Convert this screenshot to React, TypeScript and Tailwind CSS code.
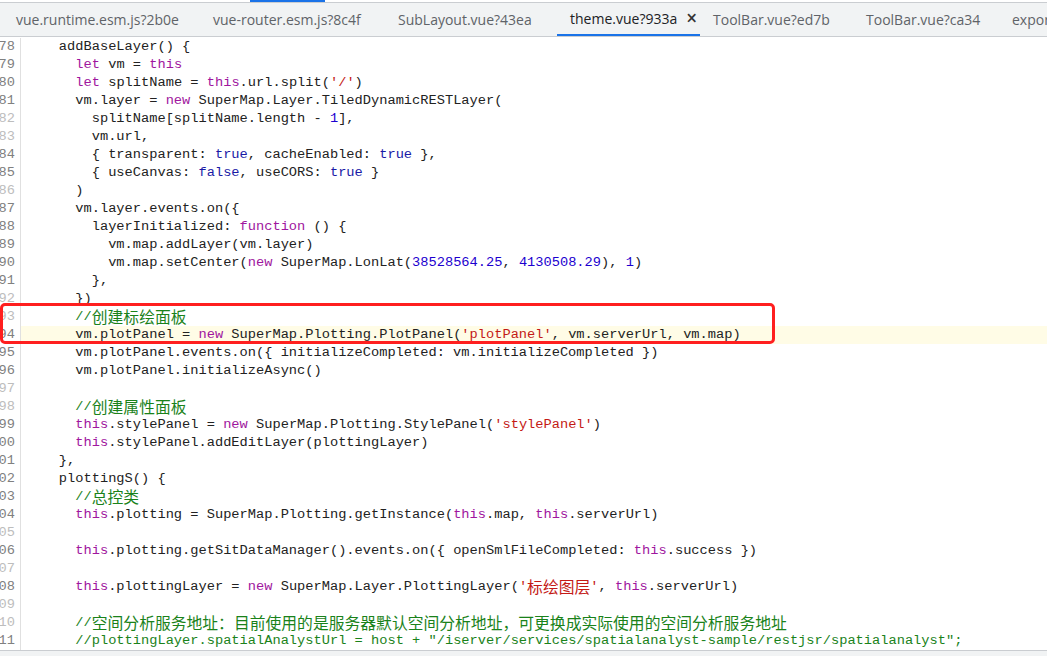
type Tok = [string, string?];

const tabs = [
  { name: "vue.runtime.esm.js?2b0e", w: "w-[197px]" },
  { name: "vue-router.esm.js?8c4f", w: "w-[185px]" },
  { name: "SubLayout.vue?43ea", w: "w-[172px]" },
  { name: "theme.vue?933a", w: "w-[143px]", active: true },
  { name: "ToolBar.vue?ed7b", w: "w-[153px]" },
  { name: "ToolBar.vue?ca34", w: "w-[146px]" },
  { name: "export.js?77f1", w: "w-[160px]" },
];

const code: { n: number; toks: Tok[]; dim?: boolean; hl?: boolean }[] = [
  { n: 78, toks: [["    addBaseLayer() {"]] },
  { n: 79, toks: [["      "], ["let", "k"], [" vm = "], ["this", "k"]] },
  { n: 80, toks: [["      "], ["let", "k"], [" splitName = "], ["this", "k"], [".url.split("], ["'/'", "s"], [")"]] },
  { n: 81, toks: [["      vm.layer = "], ["new", "k"], [" SuperMap.Layer.TiledDynamicRESTLayer("]] },
  { n: 82, dim: true, toks: [["        splitName[splitName.length - "], ["1", "n"], ["],"]] },
  { n: 83, dim: true, toks: [["        vm.url,"]] },
  { n: 84, toks: [["        { transparent: "], ["true", "a"], [", cacheEnabled: "], ["true", "a"], [" },"]] },
  { n: 85, toks: [["        { useCanvas: "], ["false", "a"], [", useCORS: "], ["true", "a"], [" }"]] },
  { n: 86, dim: true, toks: [["      )"]] },
  { n: 87, toks: [["      vm.layer.events.on({"]] },
  { n: 88, toks: [["        layerInitialized: "], ["function", "k"], [" () {"]] },
  { n: 89, toks: [["          vm.map.addLayer(vm.layer)"]] },
  { n: 90, toks: [["          vm.map.setCenter("], ["new", "k"], [" SuperMap.LonLat("], ["38528564.25", "n"], [", "], ["4130508.29", "n"], ["), "], ["1", "n"], [")"]] },
  { n: 91, toks: [["        },"]] },
  { n: 92, dim: true, toks: [["      })"]] },
  { n: 93, dim: true, toks: [["      "], ["//创建标绘面板", "c"]] },
  { n: 94, hl: true, toks: [["      vm.plotPanel = "], ["new", "k"], [" SuperMap.Plotting.PlotPanel("], ["'plotPanel'", "s"], [", vm.serverUrl, vm.map)"]] },
  { n: 95, toks: [["      vm.plotPanel.events.on({ initializeCompleted: vm.initializeCompleted })"]] },
  { n: 96, toks: [["      vm.plotPanel.initializeAsync()"]] },
  { n: 97, dim: true, toks: [[""]] },
  { n: 98, dim: true, toks: [["      "], ["//创建属性面板", "c"]] },
  { n: 99, toks: [["      "], ["this", "k"], [".stylePanel = "], ["new", "k"], [" SuperMap.Plotting.StylePanel("], ["'stylePanel'", "s"], [")"]] },
  { n: 100, toks: [["      "], ["this", "k"], [".stylePanel.addEditLayer(plottingLayer)"]] },
  { n: 101, toks: [["    },"]] },
  { n: 102, toks: [["    plottingS() {"]] },
  { n: 103, toks: [["      "], ["//总控类", "c"]] },
  { n: 104, toks: [["      "], ["this", "k"], [".plotting = SuperMap.Plotting.getInstance("], ["this", "k"], [".map, "], ["this", "k"], [".serverUrl)"]] },
  { n: 105, dim: true, toks: [[""]] },
  { n: 106, toks: [["      "], ["this", "k"], [".plotting.getSitDataManager().events.on({ openSmlFileCompleted: "], ["this", "k"], [".success })"]] },
  { n: 107, dim: true, toks: [[""]] },
  { n: 108, toks: [["      "], ["this", "k"], [".plottingLayer = "], ["new", "k"], [" SuperMap.Layer.PlottingLayer("], ["'标绘图层'", "s"], [", "], ["this", "k"], [".serverUrl)"]] },
  { n: 109, dim: true, toks: [[""]] },
  { n: 110, dim: true, toks: [["      "], ["//空间分析服务地址：目前使用的是服务器默认空间分析地址，可更换成实际使用的空间分析服务地址", "c"]] },
  { n: 111, toks: [["      "], ['//plottingLayer.spatialAnalystUrl = host + "/iserver/services/spatialanalyst-sample/restjsr/spatialanalyst";', "c"]] },
];

const colors: Record<string, string> = {
  k: "text-[#a0169e]",
  s: "text-[#c41a16]",
  n: "text-[#1c00cf]",
  a: "text-[#1a1aa6]",
  c: "text-[#1a821a]",
};

// CJK runs get a wider font so they take the same room as in the shot
function Runs({ text }: { text: string }) {
  const parts = text.split(/([\u3000-\u9fff\uff00-\uffef]+)/);
  return (
    <>
      {parts.map((p, i) =>
        /[\u3000-\u9fff\uff00-\uffef]/.test(p) ? (
          <span key={i} className="text-[15.8px] leading-[17px] align-top [font-family:'Noto_Sans_CJK_SC',sans-serif]">
            {p}
          </span>
        ) : (
          <span key={i}>{p}</span>
        )
      )}
    </>
  );
}

export default function App() {
  return (
    <div className="relative w-[1047px] h-[656px] overflow-hidden bg-white flex flex-col">
      <div className="h-[2px] flex pl-[250px]">
        <div className="w-[75px] bg-[#1a73e8]" />
      </div>
      <div className="h-[35px] flex pl-[3px] bg-[#f1f3f4] border-t border-b border-[#cacdd1] [font-family:'Open_Sans',sans-serif] text-[14px] whitespace-nowrap">
        {tabs.map((t) => (
          <div
            key={t.name}
            className={
              t.active
                ? `${t.w} shrink-0 flex items-center gap-[9px] pl-[13px] text-[#202124] border-b-2 border-[#1a73e8]`
                : `${t.w} shrink-0 flex items-center pl-[13px] text-[#5f6368]`
            }
          >
            <span>{t.name}</span>
            {t.active && <span className="text-[19px] leading-none font-semibold text-[#333]">×</span>}
          </div>
        ))}
      </div>
      <div className="flex-1 pt-[1px] [font-family:'Liberation_Mono',monospace] text-[13.7px] leading-[18px]">
        {code.map((line) => (
          <div key={line.n} className="flex h-[18px]">
            <div
              className={`w-[21px] shrink-0 flex justify-end pr-[5px] overflow-hidden border-r border-[#e0e0e0] ${
                line.dim ? "text-[#bdbdbd]" : "text-[#808080]"
              }`}
            >
              {line.n}
            </div>
            <div
              className={`flex-1 pl-[5px] whitespace-pre text-[#222] ${line.hl ? "bg-[#fffce6]" : ""}`}
            >
              {line.toks.map(([txt, type], i) => (
                <span key={i} className={type ? colors[type] : ""}>
                  <Runs text={txt} />
                </span>
              ))}
            </div>
          </div>
        ))}
      </div>
      <div className="h-[6px] bg-[#f1f3f4] border-t border-[#cacdd1]" />
      <div className="absolute left-0 top-[303px] w-[775px] h-[41px] border-[3px] border-[#ff1f1f] rounded-[5px]" />
    </div>
  );
}
